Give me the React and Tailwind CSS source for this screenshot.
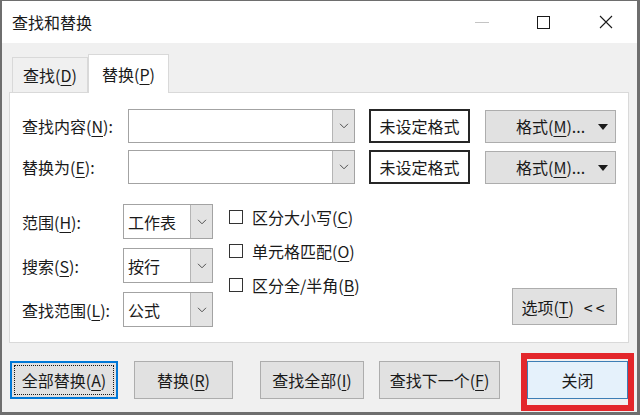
import React from 'react';

const U = ({ children }) => (
  <span className="underline underline-offset-[3px] decoration-1">{children}</span>
);

function Chevron() {
  return (
    <svg width="10" height="6" viewBox="0 0 10 6">
      <path d="M1 0.8l4 4 4-4" fill="none" stroke="#505050" strokeWidth="1" />
    </svg>
  );
}

function Combo({ className, text }) {
  return (
    <div className={`flex border border-[#a3a3a3] bg-white ${className}`}>
      <div className="flex-1 flex items-center pl-[4px] text-[16px]">{text}</div>
      <div className="w-[22px] flex items-center justify-center bg-[#e3e3e3] border-l border-[#b5b5b5]">
        <Chevron />
      </div>
    </div>
  );
}

function FormatButton() {
  return (
    <div className="relative w-[131px] h-[33px] ml-[15px] bg-[#e1e1e1] border border-[#adadad] flex items-center pl-[30px] text-[16px]">
      <span>
        格式(<U>M</U>)...
      </span>
      <svg className="absolute right-[7px] top-[13px]" width="10" height="6" viewBox="0 0 10 6">
        <path d="M0 0h10L5 6z" fill="#1a1a1a" />
      </svg>
    </div>
  );
}

function Check({ children }) {
  return (
    <div className="h-[34px] flex items-center">
      <div className="w-[14px] h-[14px] border border-[#333] bg-white" />
      <span className="ml-[9px] text-[16px]">{children}</span>
    </div>
  );
}

function Btn({ className, children }) {
  return (
    <div className={`h-[38px] flex items-center justify-center bg-[#e1e1e1] border border-[#adadad] text-[16px] ${className}`}>
      {children}
    </div>
  );
}

export default function App() {
  return (
    <div className="w-[640px] h-[415px] overflow-hidden bg-[#f0f0f0] border-t border-l-2 border-r-[3px] border-b-[3px] border-[#6e6e6e] text-[#1a1a1a] font-['Noto_Sans_CJK_SC','Microsoft_YaHei',sans-serif] flex flex-col">
      <div className="h-[42px] bg-white flex items-center pl-[10px] shrink-0">
        <span className="text-[16px]">查找和替换</span>
        <div className="ml-auto flex items-center">
          <div className="w-[14px] h-px bg-[#c4c4c4]" />
          <div className="ml-[48px] w-[13px] h-[13px] border border-[#1a1a1a]" />
          <svg className="ml-[49px] mr-[24px]" width="14" height="14" viewBox="0 0 14 14">
            <path d="M1 1l12 12M13 1L1 13" stroke="#1a1a1a" strokeWidth="1.1" />
          </svg>
        </div>
      </div>

      <div className="flex items-end pt-[11px] pl-[10px] shrink-0">
        <div className="w-[76px] h-[35px] border border-b-0 border-[#d9d9d9] flex items-center justify-center text-[16px]">
          <span>
            查找(<U>D</U>)
          </span>
        </div>
        <div className="relative z-10 w-[81px] h-[39px] -mb-px bg-white border border-b-0 border-[#d9d9d9] flex items-center justify-center text-[16px]">
          <span>
            替换(<U>P</U>)
          </span>
        </div>
      </div>

      <div className="ml-[7px] w-[620px] h-[251px] shrink-0 bg-white border border-[#d9d9d9] pl-[12px] pr-[11px]">
        <div className="mt-[16px] h-[34px] flex items-center">
          <div className="w-[106px] text-[16px]">
            查找内容(<U>N</U>):
          </div>
          <Combo className="w-[227px] h-[34px]" />
          <div className="ml-[14px] w-[101px] h-[34px] border-2 border-[#262626] flex items-center justify-center text-[16px]">
            未设定格式
          </div>
          <FormatButton />
        </div>
        <div className="mt-[7px] h-[34px] flex items-center">
          <div className="w-[106px] text-[16px]">
            替换为(<U>E</U>):
          </div>
          <Combo className="w-[227px] h-[34px]" />
          <div className="ml-[14px] w-[101px] h-[34px] border-2 border-[#262626] flex items-center justify-center text-[16px]">
            未设定格式
          </div>
          <FormatButton />
        </div>

        <div className="mt-[16px] flex">
          <div className="pt-[4px] flex flex-col gap-[9px]">
            <div className="flex items-center h-[35px]">
              <div className="w-[101px] text-[16px]">
                范围(<U>H</U>):
              </div>
              <Combo className="w-[90px] h-[35px]" text="工作表" />
            </div>
            <div className="flex items-center h-[35px]">
              <div className="w-[101px] text-[16px]">
                搜索(<U>S</U>):
              </div>
              <Combo className="w-[90px] h-[35px]" text="按行" />
            </div>
            <div className="flex items-center h-[35px]">
              <div className="w-[101px] text-[16px]">
                查找范围(<U>L</U>):
              </div>
              <Combo className="w-[90px] h-[35px]" text="公式" />
            </div>
          </div>
          <div className="ml-[16px] flex flex-col">
            <Check>
              区分大小写(<U>C</U>)
            </Check>
            <Check>
              单元格匹配(<U>O</U>)
            </Check>
            <Check>
              区分全/半角(<U>B</U>)
            </Check>
          </div>
          <Btn className="ml-auto self-end mb-[2px] w-[105px] !h-[37px] gap-[10px]">
            <span>
              选项(<U>T</U>)
            </span>
            <span className="tracking-[3px]">&lt;&lt;</span>
          </Btn>
        </div>
      </div>

      <div className="mt-[10px] flex items-start pl-[8px]">
        <div className="mt-[8px] w-[108px] h-[38px] bg-[#e1e1e1] border-2 border-[#0078d7] p-[2px]">
          <div className="w-full h-full border border-dotted border-[#1a1a1a] flex items-center justify-center text-[16px]">
            <span>
              全部替换(<U>A</U>)
            </span>
          </div>
        </div>
        <Btn className="mt-[8px] ml-[16px] w-[99px]">
          <span>
            替换(<U>R</U>)
          </span>
        </Btn>
        <Btn className="mt-[8px] ml-[27px] w-[104px]">
          <span>
            查找全部(<U>I</U>)
          </span>
        </Btn>
        <Btn className="mt-[8px] ml-[15px] w-[121px]">
          <span>
            查找下一个(<U>F</U>)
          </span>
        </Btn>
        <div className="ml-[21px] w-[113px] h-[58px] border-[6px] border-[#e3262b] pt-[2px]">
          <div className="h-[38px] bg-[#e5f1fb] border border-[#3d7eb5] flex items-center justify-center text-[16px]">
            关闭
          </div>
        </div>
      </div>
    </div>
  );
}
